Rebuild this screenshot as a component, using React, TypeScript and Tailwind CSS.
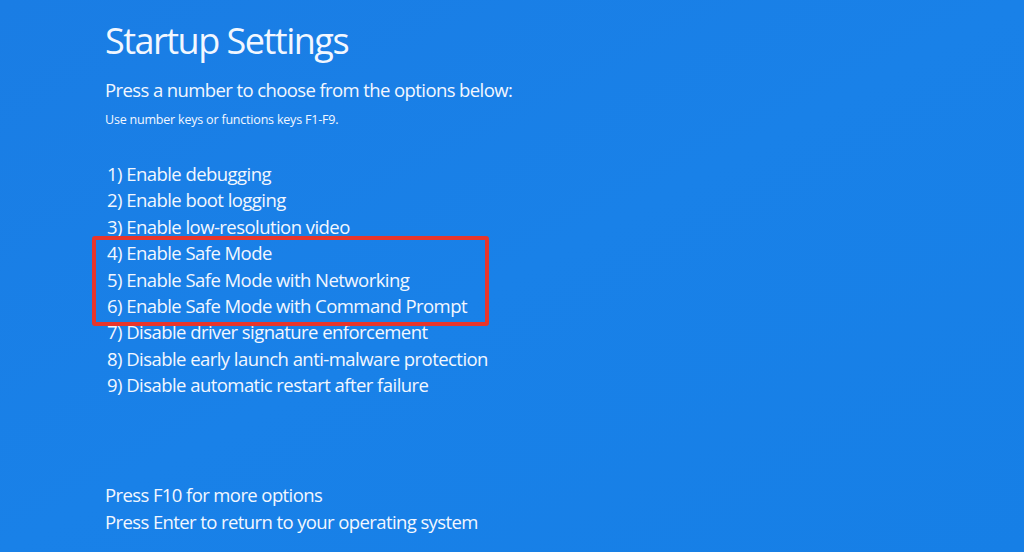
const options = [
  '1) Enable debugging',
  '2) Enable boot logging',
  '3) Enable low-resolution video',
  '4) Enable Safe Mode',
  '5) Enable Safe Mode with Networking',
  '6) Enable Safe Mode with Command Prompt',
  '7) Disable driver signature enforcement',
  '8) Disable early launch anti-malware protection',
  '9) Disable automatic restart after failure',
];

function Option({ label }: { label: string }) {
  return <div className="h-[26.4px] leading-[26.4px] whitespace-nowrap">{label}</div>;
}

export default function App() {
  const before = options.slice(0, 3);
  const safe = options.slice(3, 6);
  const after = options.slice(6);

  return (
    <div
      className="w-full h-[552px] overflow-hidden bg-gradient-to-br from-[#1a7de4] via-[#1981e8] to-[#167fe6] text-[#f2f7ff] pl-[105px] flex flex-col"
      style={{ fontFamily: '"Open Sans", "Noto Sans", sans-serif' }}
    >
      {/* Heading */}
      <h1 className="mt-[18px] text-[36px] leading-[46px] font-normal tracking-[-1.5px]">Startup Settings</h1>
      <p className="mt-[14px] text-[18.5px] leading-[24px] tracking-[-0.6px]">
        Press a number to choose from the options below:
      </p>
      <p className="mt-[10px] text-[12.5px] leading-[16px] tracking-[-0.2px]">
        Use number keys or functions keys F1-F9.
      </p>

      {/* Options */}
      <div className="mt-[33px] pl-[2px] text-[18.5px] tracking-[-0.55px]">
        {before.map((o) => (
          <Option key={o} label={o} />
        ))}
        <div className="relative">
          <div className="absolute left-[-15px] top-[-4px] w-[397px] h-[90px] border-[4px] border-[#e8352b] rounded-[3px]" />
          {safe.map((o) => (
            <Option key={o} label={o} />
          ))}
        </div>
        {after.map((o) => (
          <Option key={o} label={o} />
        ))}
      </div>

      {/* Footer */}
      <div className="mt-auto mb-[17px] text-[18.5px] tracking-[-0.6px]">
        <div className="h-[26.4px] leading-[26.4px]">Press F10 for more options</div>
        <div className="h-[26.4px] leading-[26.4px]">Press Enter to return to your operating system</div>
      </div>
    </div>
  );
}
